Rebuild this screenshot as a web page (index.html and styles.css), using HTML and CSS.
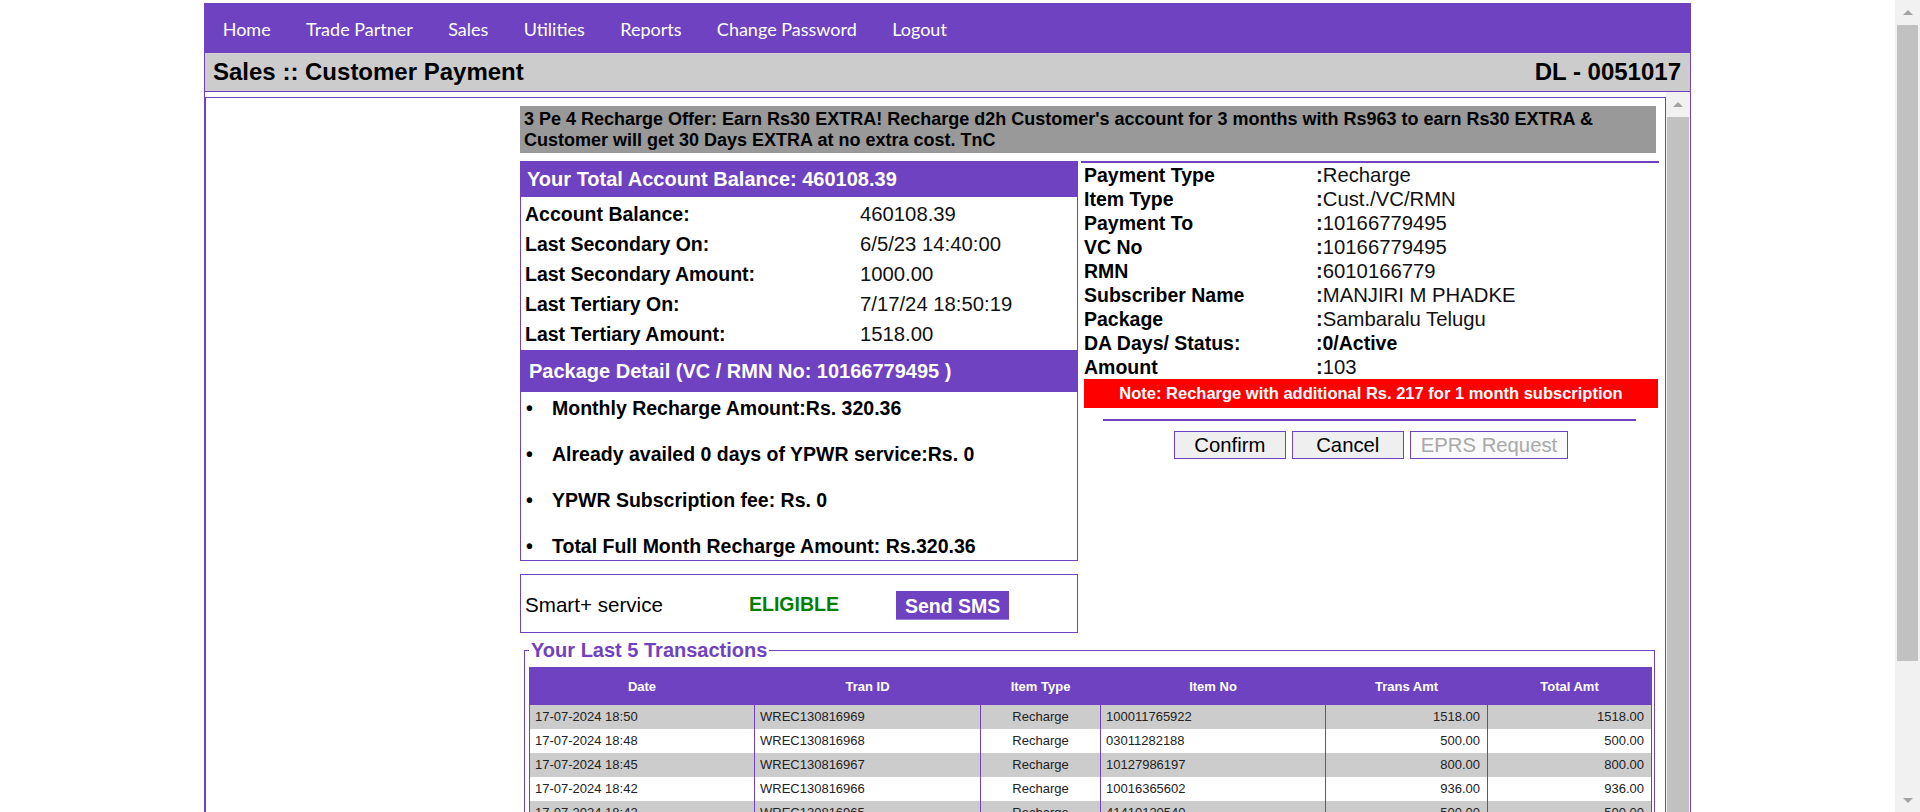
FILE: index.html
```html
<!DOCTYPE html>
<html lang="en">
<head>
<meta charset="utf-8">
<title>Sales :: Customer Payment</title>
<link rel="stylesheet" href="styles.css">
</head>
<body>
<div class="viewport">
  <div class="page">
    <nav class="nav">
      <a class="nav-item">Home</a>
      <a class="nav-item">Trade Partner</a>
      <a class="nav-item">Sales</a>
      <a class="nav-item">Utilities</a>
      <a class="nav-item">Reports</a>
      <a class="nav-item">Change Password</a>
      <a class="nav-item">Logout</a>
    </nav>
    <div class="titlebar">
      <span>Sales :: Customer Payment</span>
      <span>DL - 0051017</span>
    </div>
    <div class="frame">
      <div class="frame-body">
        <div class="box">
          <div class="offer">3 Pe 4 Recharge Offer: Earn Rs30 EXTRA! Recharge d2h Customer's account for 3 months with Rs963 to earn Rs30 EXTRA &amp; Customer will get 30 Days EXTRA at no extra cost. TnC</div>
          <div class="cols">
            <div class="left">
              <div class="panel">
                <div class="panel-head">Your Total Account Balance: 460108.39</div>
                <div class="bal-grid">
                  <div class="lbl">Account Balance:</div><div class="val">460108.39</div>
                  <div class="lbl">Last Secondary On:</div><div class="val">6/5/23 14:40:00</div>
                  <div class="lbl">Last Secondary Amount:</div><div class="val">1000.00</div>
                  <div class="lbl">Last Tertiary On:</div><div class="val">7/17/24 18:50:19</div>
                  <div class="lbl">Last Tertiary Amount:</div><div class="val">1518.00</div>
                </div>
                <div class="panel-head pkg-head">Package Detail (VC / RMN No: 10166779495 )</div>
                <ul class="pkg-list">
                  <li><span class="dot">&bull;</span>Monthly Recharge Amount:Rs. 320.36</li>
                  <li><span class="dot">&bull;</span>Already availed 0 days of YPWR service:Rs. 0</li>
                  <li><span class="dot">&bull;</span>YPWR Subscription fee: Rs. 0</li>
                  <li><span class="dot">&bull;</span>Total Full Month Recharge Amount: Rs.320.36</li>
                </ul>
              </div>
              <div class="smart">
                <span class="smart-lbl">Smart+ service</span>
                <span class="eligible">ELIGIBLE</span>
                <span class="sms">Send SMS</span>
              </div>
            </div>
            <div class="right">
              <div class="det">
                <div class="k">Payment Type</div><div class="v"><b>:</b>Recharge</div>
                <div class="k">Item Type</div><div class="v"><b>:</b>Cust./VC/RMN</div>
                <div class="k">Payment To</div><div class="v"><b>:</b>10166779495</div>
                <div class="k">VC No</div><div class="v"><b>:</b>10166779495</div>
                <div class="k">RMN</div><div class="v"><b>:</b>6010166779</div>
                <div class="k">Subscriber Name</div><div class="v"><b>:</b>MANJIRI M PHADKE</div>
                <div class="k">Package</div><div class="v"><b>:</b>Sambaralu Telugu</div>
                <div class="k">DA Days/ Status:</div><div class="v strong">:0/Active</div>
                <div class="k">Amount</div><div class="v"><b>:</b>103</div>
              </div>
              <div class="note">Note: Recharge with additional Rs. 217 for 1 month subscription</div>
              <hr class="sep">
              <div class="btns">
                <button class="btn">Confirm</button>
                <button class="btn">Cancel</button>
                <button class="btn" disabled>EPRS Request</button>
              </div>
            </div>
          </div>
          <fieldset class="txn">
            <legend>Your Last 5 Transactions</legend>
            <table class="tbl">
              <colgroup>
                <col class="c-date"><col class="c-id"><col class="c-type"><col class="c-no"><col class="c-amt"><col class="c-tot">
              </colgroup>
              <thead>
                <tr><th>Date</th><th>Tran ID</th><th>Item Type</th><th>Item No</th><th>Trans Amt</th><th>Total Amt</th></tr>
              </thead>
              <tbody>
                <tr><td>17-07-2024 18:50</td><td>WREC130816969</td><td class="ctr">Recharge</td><td>100011765922</td><td class="num">1518.00</td><td class="num">1518.00</td></tr>
                <tr><td>17-07-2024 18:48</td><td>WREC130816968</td><td class="ctr">Recharge</td><td>03011282188</td><td class="num">500.00</td><td class="num">500.00</td></tr>
                <tr><td>17-07-2024 18:45</td><td>WREC130816967</td><td class="ctr">Recharge</td><td>10127986197</td><td class="num">800.00</td><td class="num">800.00</td></tr>
                <tr><td>17-07-2024 18:42</td><td>WREC130816966</td><td class="ctr">Recharge</td><td>10016365602</td><td class="num">936.00</td><td class="num">936.00</td></tr>
                <tr><td>17-07-2024 18:42</td><td>WREC130816965</td><td class="ctr">Recharge</td><td>41410120540</td><td class="num">500.00</td><td class="num">500.00</td></tr>
              </tbody>
            </table>
          </fieldset>
        </div>
      </div>
      <div class="sb frame-sb">
        <div class="sb-btn sb-up"></div>
        <div class="sb-thumb frame-thumb"></div>
      </div>
    </div>
  </div>
</div>
<div class="sb page-sb">
  <div class="sb-btn sb-up"></div>
  <div class="sb-thumb page-thumb"></div>
  <div class="sb-fill"></div>
  <div class="sb-btn sb-down"></div>
</div>
</body>
</html>
```
FILE: styles.css
```css
* { box-sizing: border-box; }
html, body { margin: 0; padding: 0; }
body {
  font-family: "Liberation Sans", Arial, sans-serif;
  color: #000;
  background: #fff;
  display: flex;
  height: 812px;
  overflow: hidden;
}

.viewport {
  flex: 1;
  min-width: 0;
}

/* fake scrollbars */
.sb {
  background: #f1f1f1;
  display: flex;
  flex-direction: column;
  flex: none;
}
.sb-btn {
  height: 24px;
  flex: none;
  display: flex;
  align-items: center;
  justify-content: center;
}
.sb-up::before {
  content: "";
  border-left: 5px solid transparent;
  border-right: 5px solid transparent;
  border-bottom: 5px solid #a3a3a3;
}
.sb-down::before {
  content: "";
  border-left: 5px solid transparent;
  border-right: 5px solid transparent;
  border-top: 5px solid #a3a3a3;
}
.sb-thumb { background: #c1c1c1; flex: none; }
.sb-fill { flex: 1; }

.page-sb { width: 25px; height: 812px; }
.page-thumb { height: 636px; margin: 1px 2px 0 2px; }

.frame-sb { width: 24px; }
.frame-thumb { height: 760px; margin: 1px 1px 0 1px; }

.page {
  width: 1487px;
  margin-left: 204px;
  padding-top: 3px;
}

.nav {
  height: 50px;
  background: #6f42c1;
  display: flex;
  align-items: center;
  padding: 2px 0 0 1px;
  font-family: Lato, "Open Sans", sans-serif;
  font-size: 18px;
}
.nav-item {
  color: #fff;
  padding: 0 17.7px;
  text-decoration: none;
}

.titlebar {
  height: 39px;
  background: #cccccc;
  border: 1px solid #6f42c1;
  border-top: 0;
  display: flex;
  justify-content: space-between;
  align-items: center;
  padding: 0 9px 0 8px;
  font-size: 24px;
  font-weight: bold;
}

.frame {
  height: 720px;
  overflow: hidden;
  display: flex;
  border-left: 1px solid #6f42c1;
  border-right: 1px solid #6f42c1;
}
.frame-body {
  flex: 1;
  min-width: 0;
  padding-top: 5px;
}

.box {
  border: 1px solid #6f42c1;
  border-bottom: 0;
  padding: 8px 5px 40px 314px;
}

.offer {
  width: 1136px;
  background: #999999;
  font-weight: bold;
  font-size: 18px;
  line-height: 21px;
  padding: 3px 4px 2px;
  margin-bottom: 8px;
}

.cols {
  display: grid;
  grid-template-columns: 558px 578px;
  column-gap: 3px;
  align-items: start;
}

.panel { border: 1px solid #6f42c1; }
.panel-head {
  background: #6f42c1;
  color: #fff;
  font-weight: bold;
  font-size: 20px;
  height: 35px;
  display: flex;
  align-items: center;
  padding-left: 6px;
}
.pkg-head { height: 42px; padding-left: 8px; }

.bal-grid {
  display: grid;
  grid-template-columns: 335px 1fr;
  padding: 2px 0 1px 4px;
  line-height: 30px;
}
.lbl { font-weight: bold; font-size: 19.5px; }
.val { color: #111; font-size: 20.3px; }

.pkg-list {
  list-style: none;
  margin: 0;
  padding: 4px 0 2px 5px;
}
.pkg-list li {
  display: flex;
  font-weight: bold;
  font-size: 19.5px;
  line-height: 24px;
  margin-bottom: 22px;
}
.pkg-list li:last-child { margin-bottom: 0; }
.dot { width: 26px; flex: none; }

.smart {
  margin-top: 13px;
  border: 1px solid #6f42c1;
  height: 59px;
  display: grid;
  grid-template-columns: 224px 147px auto;
  align-items: center;
  padding-left: 4px;
  font-size: 19.5px;
}
.smart-lbl { font-size: 20.6px; padding-top: 2px; }
.eligible { color: #008000; font-weight: bold; padding-top: 2px; }
.sms {
  justify-self: start;
  background: #6f42c1;
  color: #fff;
  font-weight: bold;
  height: 29px;
  margin-top: 3px;
  padding: 3px 9px 0;
  display: flex;
  align-items: center;
  border-bottom: 1px solid #9b80d6;
}

.right {
  border-top: 2px solid #6f42c1;
  padding: 0 1px 0 3px;
}
.det {
  display: grid;
  grid-template-columns: 232px 1fr;
  line-height: 24px;
}
.det .k { font-weight: bold; font-size: 19.5px; }
.det .v { color: #111; font-size: 20.3px; }
.det .strong { font-weight: bold; color: #000; font-size: 19.5px; }

.note {
  background: #ff0000;
  color: #fff;
  font-weight: bold;
  font-size: 16.5px;
  text-align: center;
  height: 29px;
  line-height: 29px;
}
.sep {
  border: 0;
  border-top: 2px solid #6f42c1;
  margin: 11px 22px 0 19px;
  height: 0;
}
.btns {
  display: flex;
  justify-content: center;
  gap: 6px;
  margin-top: 10px;
}
.btn {
  height: 28px;
  min-width: 112px;
  padding: 0 10px;
  border: 1px solid #6f42c1;
  background: #efefef;
  font-family: "Liberation Sans", Arial, sans-serif;
  font-size: 20.3px;
  color: #000;
}
.btn:disabled { color: #a9a9a9; background: #fafafa; }

.txn {
  margin: 6px 0 0 4px;
  width: 1131px;
  border: 1px solid #6f42c1;
  padding: 0 3px 8px 4px;
  min-width: 0;
}
.txn legend {
  color: #6f42c1;
  font-weight: bold;
  font-size: 20px;
  line-height: 23px;
  padding: 0 2px;
}

.tbl {
  width: 1122px;
  margin-top: 5px;
  border-collapse: collapse;
  table-layout: fixed;
  font-size: 13px;
  border: 1px solid #6f42c1;
}
.c-date { width: 225px; }
.c-id { width: 226px; }
.c-type { width: 120px; }
.c-no { width: 225px; }
.c-amt { width: 162px; }
.c-tot { width: 164px; }
.tbl th {
  background: #6f42c1;
  color: #fff;
  height: 37px;
  font-weight: bold;
  text-align: center;
  border: 1px solid #6f42c1;
}
.tbl td {
  height: 24px;
  padding: 0 5px;
  color: #222;
  border-left: 1px solid #6f42c1;
  border-right: 1px solid #6f42c1;
  white-space: nowrap;
}
.tbl tbody tr:nth-child(odd) td { background: #cccccc; }
.tbl .ctr { text-align: center; }
.tbl .num { text-align: right; padding-right: 7px; }
```
